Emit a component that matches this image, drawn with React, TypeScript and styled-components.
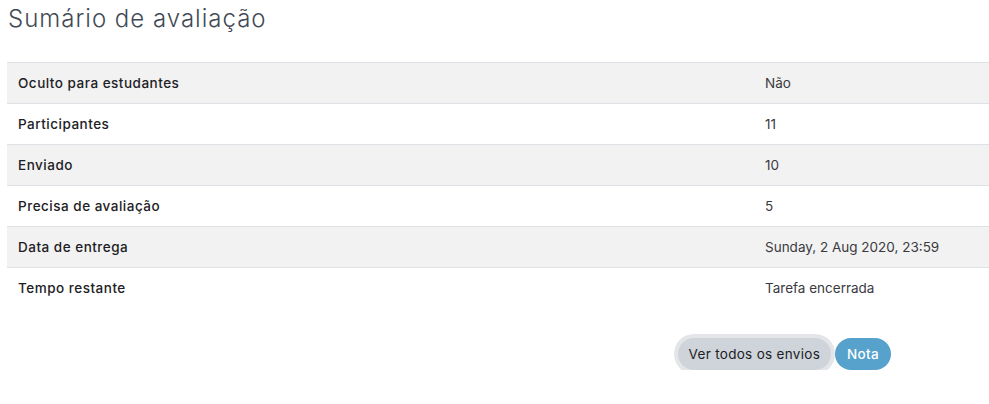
import React from "react";
import styled, { createGlobalStyle } from "styled-components";

const Global = createGlobalStyle`
  html, body { margin: 0; padding: 0; background: #fff; }
  body { font-family: Inter, "Open Sans", sans-serif; color: #1d2125; }
`;

const Page = styled.div`
  padding: 0 0 0 7px;
`;

const Title = styled.h2`
  margin: 0;
  padding: 3px 0 0 1px;
  height: 58px;
  box-sizing: border-box;
  font-size: 24px;
  font-weight: 350;
  line-height: 32px;
  color: #3f4a56;
  letter-spacing: 1px;
`;

const Table = styled.div`
  display: grid;
  grid-template-columns: 747px 1fr;
  border-top: 1px solid #dee2e6;
  margin-top: 4px;
`;

const Cell = styled.div<{ $striped: boolean; $label?: boolean; $last: boolean }>`
  background: ${(p) => (p.$striped ? "#f2f2f2" : "#fff")};
  border-bottom: 1px solid ${(p) => (p.$last ? "transparent" : "#dee2e6")};
  padding: 10px 11px;
  height: 41px;
  box-sizing: border-box;
  font-size: 13.5px;
  line-height: 20px;
  letter-spacing: ${(p) => (p.$label ? "0.5px" : "0")};
  font-weight: ${(p) => (p.$label ? 500 : 400)};
  color: ${(p) => (p.$label ? "#1d2125" : "#3a3a40")};
  white-space: nowrap;
`;

const Row = styled.div`
  display: contents;
`;

const Actions = styled.div`
  display: flex;
  justify-content: flex-end;
  align-items: center;
  gap: 4px;
  padding: 29px 98px 0 0;
`;

const Button = styled.button<{ $primary?: boolean }>`
  font-family: Inter, "Open Sans", sans-serif;
  font-size: 13.5px;
  letter-spacing: 0.3px;
  font-weight: ${(p) => (p.$primary ? 500 : 400)};
  height: 32px;
  padding: 0 ${(p) => (p.$primary ? 12 : 11)}px;
  border: none;
  border-radius: 16px;
  cursor: pointer;
  background: ${(p) => (p.$primary ? "#56a2cd" : "#ced4da")};
  color: ${(p) => (p.$primary ? "#fff" : "#1d2125")};
  box-shadow: ${(p) => (p.$primary ? "none" : "0 0 0 4px #e3e5e8")};
`;

const rows: [string, string][] = [
  ["Oculto para estudantes", "Não"],
  ["Participantes", "11"],
  ["Enviado", "10"],
  ["Precisa de avaliação", "5"],
  ["Data de entrega", "Sunday, 2 Aug 2020, 23:59"],
  ["Tempo restante", "Tarefa encerrada"],
];

export default function App() {
  return (
    <>
      <Global />
      <Page>
        <Title>Sumário de avaliação</Title>
        <Table>
          {rows.map(([k, v], i) => {
            const last = i === rows.length - 1;
            return (
              <Row key={k}>
                <Cell $striped={i % 2 === 0} $label $last={last}>
                  {k}
                </Cell>
                <Cell $striped={i % 2 === 0} $last={last}>
                  {v}
                </Cell>
              </Row>
            );
          })}
        </Table>
        <Actions>
          <Button>Ver todos os envios</Button>
          <Button $primary>Nota</Button>
        </Actions>
      </Page>
    </>
  );
}
